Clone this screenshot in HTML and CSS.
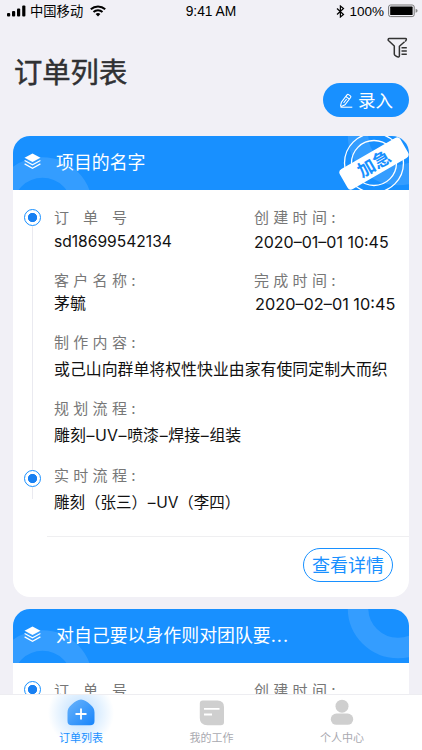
FILE: index.html
```
<!DOCTYPE html>
<html lang="zh-CN">
<head>
<meta charset="utf-8">
<title>订单列表</title>
<link rel="stylesheet" href="styles.css">
</head>
<body>
<div class="app">
  <div class="status">
    <div class="status-left">
      <svg width="20" height="12" viewBox="0 0 20 12"><rect x="0" y="8" width="3.2" height="3.6" rx="1"/><rect x="5" y="6" width="3.2" height="5.6" rx="1"/><rect x="10" y="3.5" width="3.2" height="8.1" rx="1"/><rect x="15.2" y="0.6" width="3.2" height="11" rx="1"/></svg>
      <span class="carrier">中国移动</span>
      <svg width="16" height="12" viewBox="0 0 16 12" fill="none" stroke="#000" stroke-width="2"><path d="M.8 4.2a10.6 10.6 0 0 1 14.4 0M3.5 7.1a6.6 6.6 0 0 1 9 0"/><path d="M5.6 9.1a3.6 3.6 0 0 1 4.8 0L8 11.6z" fill="#000" stroke="none"/></svg>
    </div>
    <span class="clock">9:41 AM</span>
    <div class="status-right">
      <svg width="9" height="13" viewBox="0 0 9 13" fill="none" stroke="#000" stroke-width="1.2"><path d="M1 3.5l6.5 6L4.4 12V1l3.1 2.5-6.5 6"/></svg>
      <span class="percent">100%</span>
      <svg width="31" height="14" viewBox="0 0 31 14"><rect x=".6" y="1" width="25.6" height="11.6" rx="2" fill="none" stroke="#777" stroke-width="1"/><rect x="2.2" y="2.6" width="22.4" height="8.4" rx=".6"/><path d="M27.6 4.8q2 .5 2 2t-2 2z" fill="#888"/></svg>
    </div>
  </div>

  <header class="page-head">
    <h1>订单列表</h1>
    <div class="actions">
      <svg class="filter" width="22" height="22" viewBox="0 0 22 22" fill="none" stroke="#333" stroke-width="1.5" stroke-linejoin="round"><path d="M18.2 4.4c1.7-1.9 1.4-2.9.2-2.9H2.4C.9 1.500.8 2.900 1.700 3.800L7.300 9v8.200c0 1.200 3.200 3.300 4.600 2.600.4-.2.500-.6.500-1V9.200l5.200-4.400"/><path d="M14.500 10.700h5.300M14.500 14h5.300M14.500 17.200h5.300"/></svg>
      <button class="btn-add">
        <svg width="14" height="15" viewBox="0 0 14 15" fill="none" stroke="#fff" stroke-width="1.100"><path d="M1.600 12.600l.8-3.400L8 1.900q.7-.9 1.600-.3l1.800 1.300q.9.700.2 1.600L6 11.800l-3.200 1.500q-1.300.4-1.200-.7zM6.900 3.500l3.400 2.600M4.600 10l3-4"/><path d="M1.500 14.200h11.800"/></svg>
        <span>录入</span>
      </button>
    </div>
  </header>

  <main class="list">
    <article class="card">
      <div class="card-head">
        <svg class="rings" width="396" height="54" viewBox="0 0 396 54" fill="none" stroke="#fff" stroke-opacity=".12" stroke-width="20.500"><circle cx="29.500" cy="71" r="39.500"/><circle cx="385" cy="-1" r="40"/></svg>
        <svg class="layers" width="17" height="17" viewBox="0 0 17 17" fill="none" stroke="#fff" stroke-width="1.200"><path d="M8.500 .5l8 4.200-8 4.200-8-4.200z" fill="#fff" stroke="none"/><path d="M.6 7.500l7.900 4.300 7.900-4.300M.6 10.900l7.900 4.300 7.900-4.300"/></svg>
        <h2>项目的名字</h2>
        <div class="stamp">
          <svg width="64" height="54" viewBox="0 0 64 54" fill="none" stroke="#fff"><circle cx="31" cy="27" r="29.500" stroke-width="1.300"/><circle cx="31" cy="27" r="22.500" stroke-width="1.300"/></svg>
          <span class="stamp-label">加急</span>
        </div>
      </div>
      <div class="card-body">
        <div class="timeline"><i class="dot"></i><i class="line"></i><i class="dot"></i><i class="tail"></i></div>
        <div class="fields">
          <div class="row r1">
            <div class="field"><span class="label wide">订单号</span><span class="value num">sd18699542134</span></div>
            <div class="field"><span class="label">创建时间:</span><span class="value num date">2020–01–01 10:45</span></div>
          </div>
          <div class="row r2">
            <div class="field"><span class="label">客户名称:</span><span class="value">茅毓</span></div>
            <div class="field later"><span class="label">完成时间:</span><span class="value num date">2020–02–01 10:45</span></div>
          </div>
          <div class="field r3"><span class="label">制作内容:</span><span class="value">或己山向群单将权性快业由家有使同定制大而织</span></div>
          <div class="field r4"><span class="label">规划流程:</span><span class="value">雕刻<b>–</b>UV<b>–</b>喷漆<b>–</b>焊接<b>–</b>组装</span></div>
          <div class="field r5"><span class="label">实时流程:</span><span class="value">雕刻（张三）<b>–</b>UV（李四）</span></div>
        </div>
      </div>
      <div class="card-foot"><button class="btn-detail">查看详情</button></div>
    </article>

    <article class="card">
      <div class="card-head">
        <svg class="rings" width="396" height="54" viewBox="0 0 396 54" fill="none" stroke="#fff" stroke-opacity=".12" stroke-width="20.500"><circle cx="29.500" cy="71" r="39.500"/><circle cx="385" cy="-1" r="40"/></svg>
        <svg class="layers" width="17" height="17" viewBox="0 0 17 17" fill="none" stroke="#fff" stroke-width="1.200"><path d="M8.500 .5l8 4.200-8 4.200-8-4.200z" fill="#fff" stroke="none"/><path d="M.6 7.500l7.900 4.300 7.900-4.300M.6 10.900l7.900 4.300 7.900-4.300"/></svg>
        <h2>对自己要以身作则对团队要<span class="dots">...</span></h2>
      </div>
      <div class="card-body">
        <div class="timeline"><i class="dot"></i></div>
        <div class="fields">
          <div class="row r1">
            <div class="field"><span class="label wide">订单号</span></div>
            <div class="field"><span class="label">创建时间:</span></div>
          </div>
        </div>
      </div>
    </article>
  </main>

  <nav class="tabs">
    <a class="tab active">
      <svg width="28" height="27" viewBox="0 0 28 27"><defs><linearGradient id="home" x1="0" y1="0" x2="1" y2="1"><stop offset="0" stop-color="#6bb4fb"/><stop offset="1" stop-color="#1684fb"/></linearGradient></defs><path d="M.5 13.500C.5 10.200 1.800 8 4.500 5.700 8 2.700 10.800.5 14 .5s6 2.200 9.500 5.200c2.700 2.300 4 4.500 4 7.800V22c0 3-1.500 4.300-4.300 4.300H4.800C2 26.300.5 25 .5 22z" fill="url(#home)"/><path d="M14 9.500v11M8.500 15h11" stroke="#fff" stroke-width="1.800"/></svg>
      <span>订单列表</span>
    </a>
    <a class="tab">
      <svg width="26" height="27" viewBox="0 0 26 27"><path d="M.8 4.500Q.8 1.500 3.800 1.500H18.500Q25 1.500 25 8v15q0 3.300-3.300 3.300H8.500Q.8 26.300.8 19z" fill="#cfcfcf"/><path d="M5 9.800h15.500M5 15.500h8" stroke="#fff" stroke-width="1.800"/></svg>
      <span>我的工作</span>
    </a>
    <a class="tab">
      <svg width="24" height="27" viewBox="0 0 24 27" fill="#cfcfcf"><circle cx="12" cy="7.200" r="6.500"/><rect x=".8" y="14.500" width="22.400" height="11.300" rx="5.600"/></svg>
      <span>个人中心</span>
    </a>
  </nav>
</div>
</body>
</html>
```
FILE: styles.css
```
* { box-sizing: border-box; }

body {
  margin: 0;
  background: #f1f0f6;
  font-family: Inter, "Noto Sans CJK SC", sans-serif;
  color: #111;
}

h1, h2 { margin: 0; font-weight: 400; }
svg { display: block; flex: none; }
i { display: block; }
button { font-family: inherit; padding: 0; border: 0; }

.app {
  display: flex;
  flex-direction: column;
  width: 422px;
  height: 750px;
  overflow: hidden;
}

.status {
  display: grid;
  grid-template-columns: 1fr auto 1fr;
  align-items: center;
  height: 22px;
  padding: 0 5px 0 7px;
  flex: none;
  color: #000;
}
.status-left, .status-right { display: flex; align-items: center; }
.status-left { gap: 3px; }
.status-left svg:last-child { margin-left: 4px; }
.carrier { font-size: 13.300px; line-height: 20px; }
.clock, .percent { font-family: "Liberation Sans", sans-serif; }
.clock { padding: 1px 2px 0 0; font-size: 13.800px; }
.status-right { justify-content: flex-end; gap: 4px; margin-right: -2px; }
.percent { font-size: 13.500px; }

.page-head {
  display: flex;
  justify-content: space-between;
  height: 114px;
  padding: 0 13px 0 14px;
  flex: none;
}
.page-head h1 {
  margin-top: 31px;
  font-size: 28.300px;
  line-height: 40px;
  color: #303133;
  -webkit-text-stroke: .5px #303133;
}
.actions { display: flex; flex-direction: column; align-items: flex-end; }
.filter { margin-top: 15px; }
.btn-add {
  display: flex;
  align-items: center;
  justify-content: center;
  gap: 5px;
  width: 86px;
  height: 34px;
  margin-top: 24px;
  padding-top: 1px;
  border-radius: 17px;
  background: #1890ff;
  color: #fff;
  font-size: 17.500px;
  line-height: 26px;
}

.list {
  display: flex;
  flex-direction: column;
  gap: 11.500px;
  flex: 1;
  min-height: 0;
  padding: 0 13px;
  overflow: hidden;
}

.card { flex: none; height: 461px; border-radius: 17px; background: #fff; overflow: hidden; }
.card-head {
  position: relative;
  display: flex;
  align-items: center;
  gap: 14px;
  height: 54px;
  padding: 0 11px;
  background: #1890ff;
  color: #fff;
}
.rings { position: absolute; inset: 0; }
.layers { position: relative; margin-top: -3px; }
.card-head h2 { position: relative; padding-left: 1px; font-size: 17.900px; line-height: 26px; }
.dots { letter-spacing: 1px; }
.stamp { position: absolute; right: 2px; top: 0; width: 64px; height: 54px; }
.stamp-label {
  position: absolute;
  left: -4px;
  top: 15.500px;
  width: 70px;
  height: 23px;
  border-radius: 4px;
  background: #fff;
  color: #1890ff;
  font-size: 17.500px;
  font-weight: 700;
  line-height: 23px;
  text-align: center;
  transform: rotate(-30deg);
}

.card-body { display: flex; height: 347px; padding-left: 11px; }
.timeline {
  display: flex;
  flex-direction: column;
  align-items: center;
  width: 17px;
  padding-top: 18.500px;
}
.dot {
  width: 17px;
  height: 17px;
  border: 1.500px solid #1890ff;
  border-radius: 50%;
  background: radial-gradient(circle, #1880f2 4.300px, #fff 5px);
  flex: none;
}
.line { width: 1px; height: 244px; background: #eaeaf0; }
.tail { width: 1px; height: 12px; background: #eaeaf0; }

.fields {
  flex: 1;
  margin-left: 6px;
  padding: 17px 0 0 7px;
  border-bottom: 1px solid #efeff1;
}
.row { display: grid; grid-template-columns: 200px 1fr; }
.field { display: flex; flex-direction: column; align-items: flex-start; white-space: nowrap; }
.label {
  font-size: 15px;
  line-height: 22px;
  letter-spacing: 4.300px;
  color: #777;
}
.label.wide { letter-spacing: 14px; }
.value { margin-top: 2px; font-size: 15.900px; line-height: 24px; }
.value b { padding: 0 .7px; font-weight: 400; }
.num { font-size: 15.600px; }
.r1 { height: 63px; }
.r1 .value { margin-top: 1px; }
.r1 .date { font-size: 16px; }
.r2 { height: 62px; }
.r2 .value { margin-top: 0; }
.later .value { padding-left: 1px; font-size: 16.300px; }
.r3 { height: 66px; }
.r4 { height: 67px; }
.r3 .value, .r4 .value, .r5 .value { margin-top: 4px; }
.r5 .value { font-size: 15.500px; }

.card-foot { display: flex; justify-content: flex-end; padding: 11px 16px 0 0; }
.btn-detail {
  width: 90px;
  height: 34px;
  padding-top: 1px;
  border: 1.500px solid #1890ff;
  border-radius: 17px;
  background: #fff;
  color: #1890ff;
  font-size: 18px;
  line-height: 28px;
}

.tabs {
  display: grid;
  grid-template-columns: 162px 99px 162px;
  flex: none;
  height: 56px;
  border-top: 1px solid #ededf1;
  background: #fff;
}
.tab {
  display: flex;
  flex-direction: column;
  align-items: center;
  gap: 3px;
  padding-top: 4px;
  font-size: 11px;
  line-height: 18px;
  color: #a9a9b0;
}
.active {
  color: #1890ff;
  background: radial-gradient(circle at 50% 18px, #b9dcff 0, #deefff 18px, #fff 33px);
}
```
